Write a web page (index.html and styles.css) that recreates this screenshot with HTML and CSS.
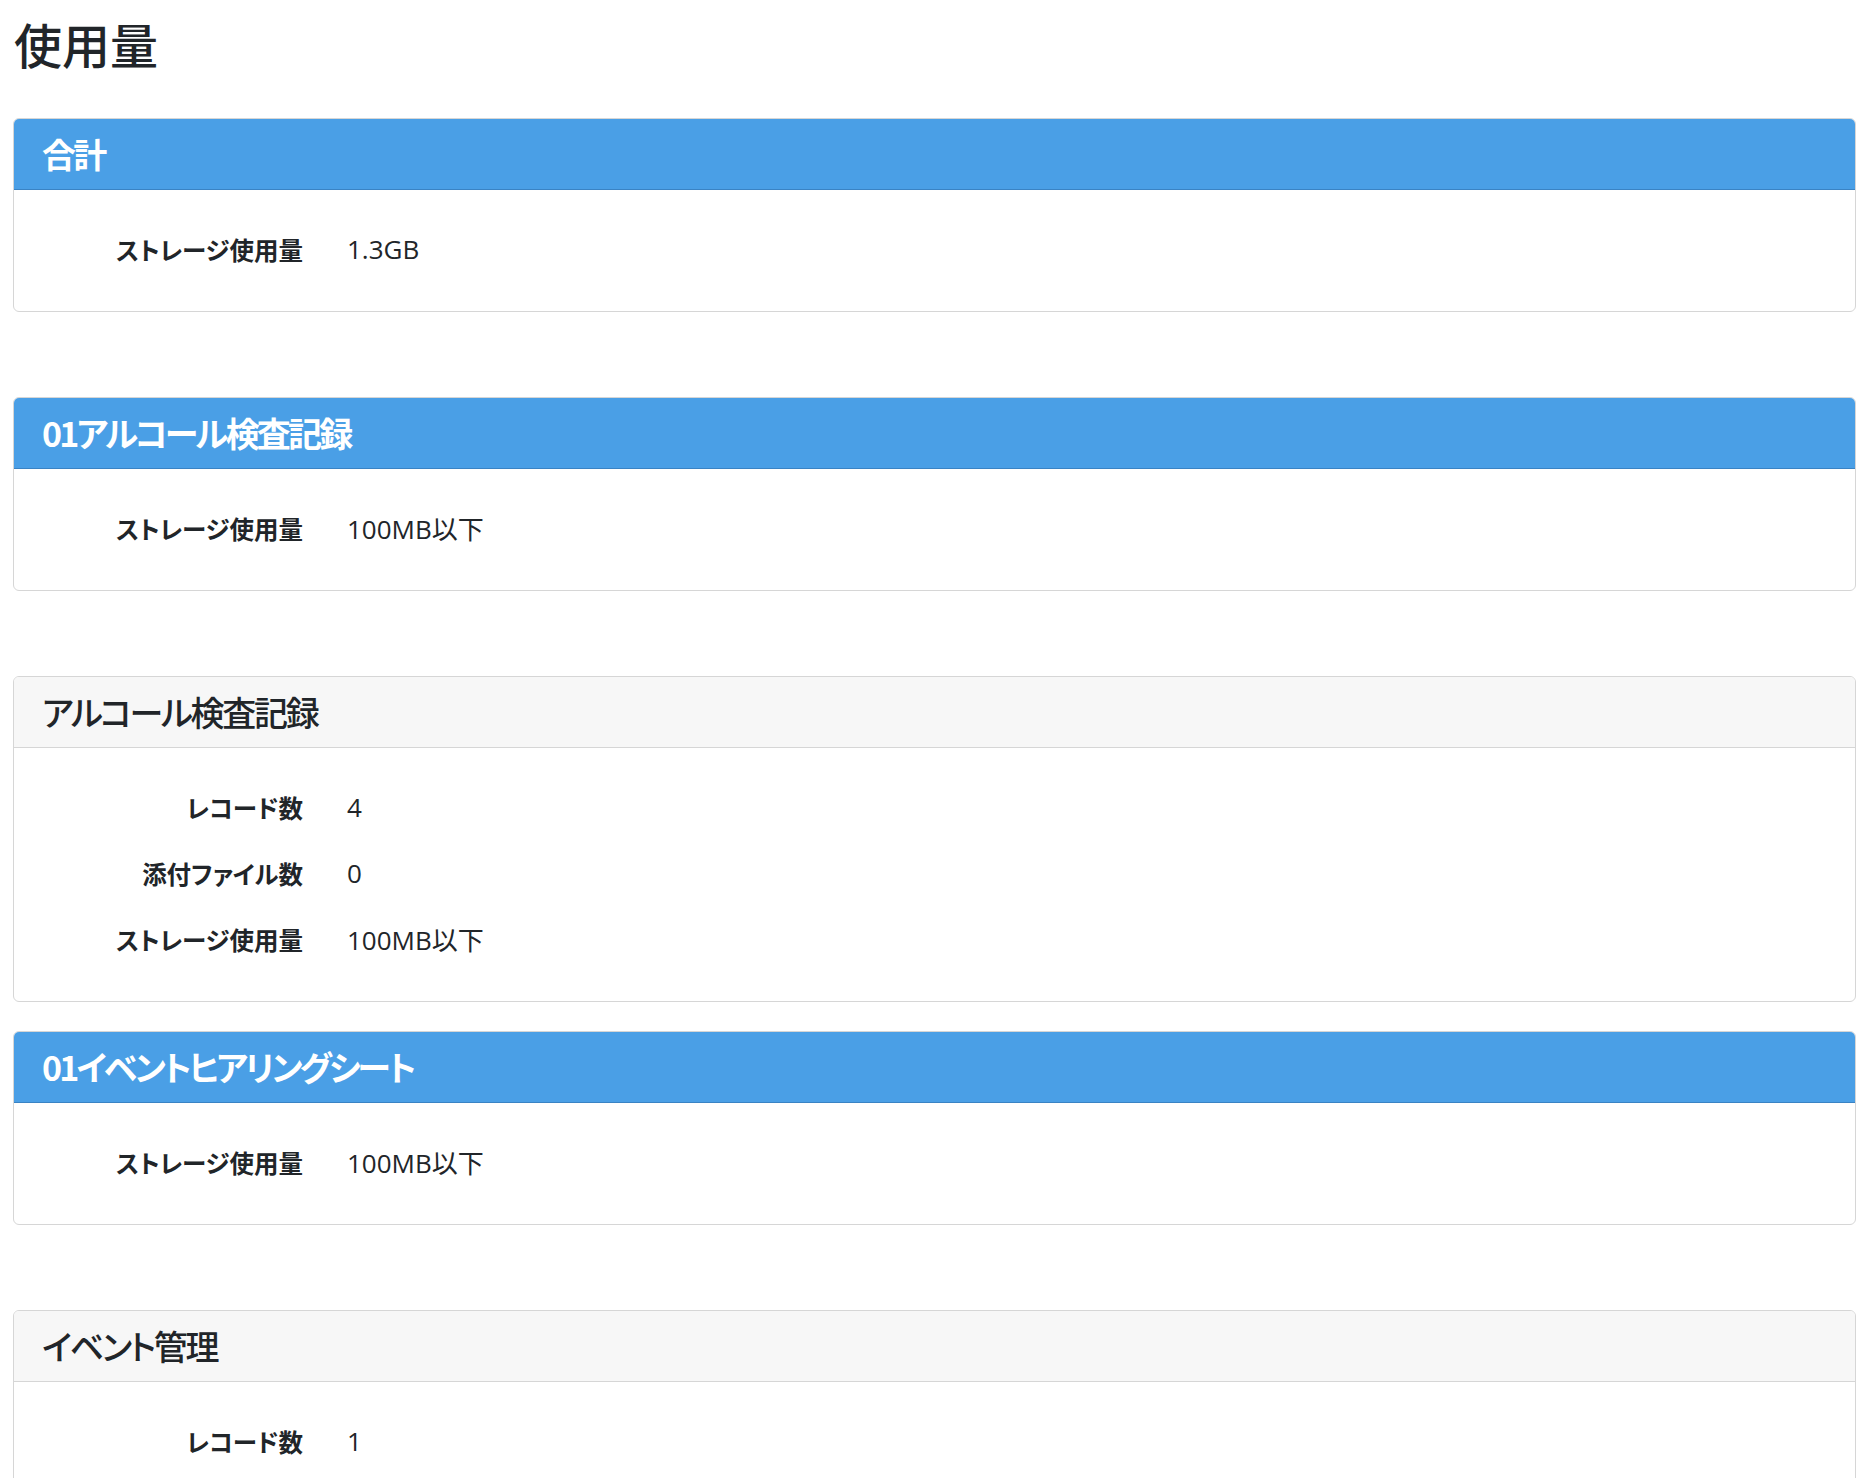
FILE: index.html
```html
<!DOCTYPE html>
<html lang="ja">
<head>
    <meta charset="UTF-8">
    <meta name="viewport" content="width=device-width, initial-scale=1.0">
    <title>使用量</title>
    <link rel="stylesheet" href="styles.css">
</head>
<body>
    <h1 class="page-title">使用量</h1>

    <div class="card card-space">
        <div class="card-header">合計</div>
        <div class="card-body">
            <dl class="usage">
                <dt>ストレージ使用量</dt>
                <dd>1.3GB</dd>
            </dl>
        </div>
    </div>

    <div class="card card-space">
        <div class="card-header">01アルコール検査記録</div>
        <div class="card-body">
            <dl class="usage">
                <dt>ストレージ使用量</dt>
                <dd>100MB以下</dd>
            </dl>
        </div>
    </div>

    <div class="card card-app">
        <div class="card-header">アルコール検査記録</div>
        <div class="card-body">
            <dl class="usage">
                <dt>レコード数</dt>
                <dd>4</dd>
                <dt>添付ファイル数</dt>
                <dd>0</dd>
                <dt>ストレージ使用量</dt>
                <dd>100MB以下</dd>
            </dl>
        </div>
    </div>

    <div class="card card-space">
        <div class="card-header">01イベントヒアリングシート</div>
        <div class="card-body">
            <dl class="usage">
                <dt>ストレージ使用量</dt>
                <dd>100MB以下</dd>
            </dl>
        </div>
    </div>

    <div class="card card-app">
        <div class="card-header">イベント管理</div>
        <div class="card-body">
            <dl class="usage">
                <dt>レコード数</dt>
                <dd>1</dd>
                <dt>添付ファイル数</dt>
                <dd>0</dd>
                <dt>ストレージ使用量</dt>
                <dd>100MB以下</dd>
            </dl>
        </div>
    </div>
</body>
</html>
```

FILE: styles.css
```css
/* Base */
body {
    font-family: 'Open Sans', 'Noto Sans CJK JP', sans-serif;
    font-feature-settings: "palt";
    color: #212529;
    background-color: #fff;
    margin: 0;
    padding: 0 19px 0 13px;
}

.page-title {
    font-size: 48px;
    font-weight: 500;
    line-height: 58px;
    margin: 17px 0 43px 1px;
}

/* Cards */
.card {
    border: 1px solid #d6d6d6;
    border-radius: 6px;
    overflow: hidden;
}

.card-space {
    margin-bottom: 85px;
}

.card-app {
    margin-bottom: 29px;
}

.card-header {
    font-family: 'Noto Sans CJK JP', sans-serif;
    font-size: 34px;
    line-height: 40px;
    padding: 15px 28px;
}

.card-space .card-header {
    background-color: #4a9fe6;
    border-bottom: 1px solid #3a83c4;
    color: #fff;
    font-weight: 700;
    letter-spacing: -2.8px;
}

.card-app .card-header {
    background-color: #f7f7f7;
    border-bottom: 1px solid #d6d6d6;
    font-weight: 500;
    letter-spacing: -2.3px;
}

.card-body {
    padding: 26px 24px 29px;
}

/* Usage rows */
.usage {
    display: grid;
    grid-template-columns: 265px 1fr;
    grid-auto-rows: 66px;
    column-gap: 44px;
    align-items: center;
    margin: 0;
    font-size: 26px;
}

.usage dt {
    font-size: 24.5px;
    font-weight: 700;
    text-align: right;
}

.usage dd {
    margin: 0;
}
```
